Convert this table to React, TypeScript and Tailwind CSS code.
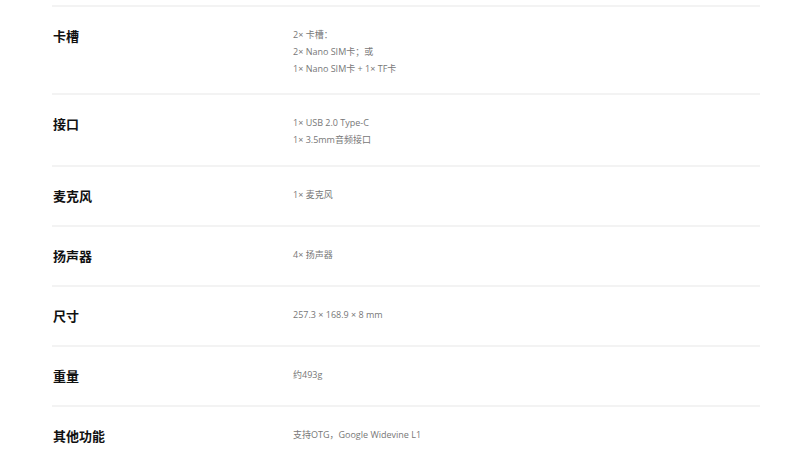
import React from "react";

const rows: { label: string; values: string[] }[] = [
  { label: "卡槽", values: ["2× 卡槽：", "2× Nano SIM卡；或", "1× Nano SIM卡 + 1× TF卡"] },
  { label: "接口", values: ["1× USB 2.0 Type-C", "1× 3.5mm音频接口"] },
  { label: "麦克风", values: ["1× 麦克风"] },
  { label: "扬声器", values: ["4× 扬声器"] },
  { label: "尺寸", values: ["257.3 × 168.9 × 8 mm"] },
  { label: "重量", values: ["约493g"] },
  { label: "其他功能", values: ["支持OTG，Google Widevine L1"] },
];

export default function App() {
  return (
    <div className="w-[800px] h-[467px] overflow-hidden bg-white pt-[5px]">
      <div className="ml-[52px] w-[708px]">
        {rows.map((r) => (
          <div key={r.label} className="flex border-t-2 border-[#f3f3f3] pt-[18px] pb-[16px]">
            <div
              className="w-[241px] pl-[1px] pb-[2px] text-[13px] font-bold leading-[22px] text-[#111]"
              style={{ fontFamily: '"Noto Sans CJK SC", "Noto Sans", sans-serif' }}
            >
              {r.label}
            </div>
            <div
              className="flex flex-col pt-[2px] text-[9px] leading-[16.75px] text-[#777]"
              style={{ fontFamily: '"Open Sans", "Noto Sans CJK SC", sans-serif' }}
            >
              {r.values.map((v) => (
                <div key={v}>{v}</div>
              ))}
            </div>
          </div>
        ))}
      </div>
    </div>
  );
}
